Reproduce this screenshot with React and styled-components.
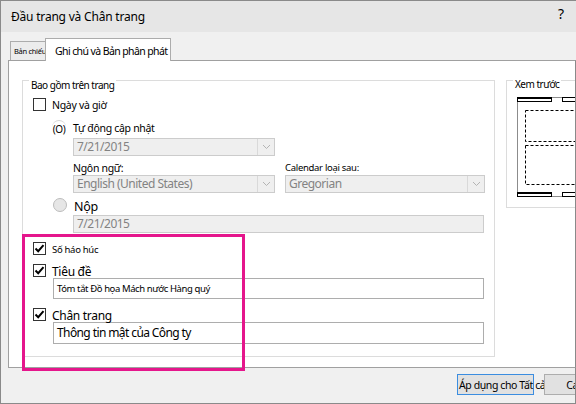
import React from 'react';
import styled, { createGlobalStyle } from 'styled-components';

const GlobalStyle = createGlobalStyle`
html, body {
    margin: 0;
    padding: 0;
    background: #fff;
}
body {
    font-family: "Noto Sans", "Liberation Sans", sans-serif;
    color: #000;
}
* {
    box-sizing: border-box;
}
`;

const Check = () => (
    <svg width="11" height="11" viewBox="0 0 11 11">
        <path d="M1.5 5.5 L4.2 8.2 L9.5 2.2" fill="none" stroke="#000" strokeWidth="2" />
    </svg>
);

const Chevron = () => (
    <svg width="9" height="6" viewBox="0 0 9 6">
        <path d="M1 1 L4.5 4.5 L8 1" fill="none" stroke="#b4b4b4" strokeWidth="1" />
    </svg>
);

// header / body / footer placeholders on a page thumbnail
const PagePreview = () => (
    <svg width="70" height="101" viewBox="0 0 70 101">
        <rect x="0.5" y="0.5" width="90" height="99" fill="#fff" stroke="#8c8c8c" />
        <rect x="0" y="0" width="35" height="5" fill="#000" />
        <rect x="1" y="2" width="33" height="2" fill="#fff" />
        <rect x="45.5" y="0.5" width="40" height="4" fill="#fff" stroke="#000" />
        <rect x="8.5" y="13.5" width="80" height="31" fill="none" stroke="#000" strokeDasharray="3 2" />
        <rect x="8.5" y="48.5" width="80" height="39" fill="none" stroke="#000" strokeDasharray="3 2" />
        <rect x="0" y="95" width="35" height="5" fill="#000" />
        <rect x="1" y="97" width="33" height="2" fill="#fff" />
        <rect x="45.5" y="95.5" width="40" height="4" fill="#fff" stroke="#000" />
    </svg>
);

const CheckRow = ({ checked, size, top, children }) => (
    <Row $top={top} $height={13}>
        <Box>{checked && <Check />}</Box>
        <Label $size={size}>{children}</Label>
    </Row>
);

const App = () => {
    return (
        <>
            <GlobalStyle />
            <Window>
                <TitleBar>
                    <Title>Đầu trang và Chân trang</Title>
                    <Help>?</Help>
                </TitleBar>

                <Body>
                    <Tabs>
                        <Tab>Bản chiếu</Tab>
                        <Tab $active>Ghi chú và Bản phân phát</Tab>
                    </Tabs>

                    <Panel>
                        <Group $width={473} $height={277}>
                            <GroupLabel>Bao gồm trên trang</GroupLabel>

                            <CheckRow top={17}>Ngày và giờ</CheckRow>

                            <Row $top={9} $height={14} $indent={20}>
                                <RadioText>(O)</RadioText>
                                <Label>Tự động cập nhật</Label>
                            </Row>
                            <Select $top={4} $indent={40} $width={202}>
                                <span>7/21/2015</span>
                                <Arrow><Chevron /></Arrow>
                            </Select>

                            <Split>
                                <Column $width={202}>
                                    <SmallLabel>Ngôn ngữ:</SmallLabel>
                                    <Select $width={202}>
                                        <span>English (United States)</span>
                                        <Arrow><Chevron /></Arrow>
                                    </Select>
                                </Column>
                                <Column $width={200}>
                                    <SmallLabel $narrow>Calendar loại sau:</SmallLabel>
                                    <Select $width={200}>
                                        <span>Gregorian</span>
                                        <Arrow><Chevron /></Arrow>
                                    </Select>
                                </Column>
                            </Split>

                            <Row $top={5} $height={14} $indent={20}>
                                <Radio />
                                <Label $size={12.5}>Nộp</Label>
                            </Row>
                            <Field $top={3} $indent={40} $width={411} $height={18} $disabled>
                                7/21/2015
                            </Field>

                            <CheckRow top={9} checked size={9.5}>Số háo húc</CheckRow>
                            <CheckRow top={9} checked size={12}>Tiêu đề</CheckRow>
                            <Field $top={1} $indent={20} $width={431} $height={21} $size={9.5} $spacing={-0.4}>
                                Tóm tắt Đồ họa Mách nước Hàng quý
                            </Field>
                            <CheckRow top={9} checked size={12}>Chân trang</CheckRow>
                            <Field $top={1} $indent={20} $width={431} $height={22} $spacing={-0.6}>
                                Thông tin mật của Công ty
                            </Field>
                        </Group>

                        <Group $width={90} $height={128}>
                            <GroupLabel $top={-3}>Xem trước</GroupLabel>
                            <PreviewArea>
                                <PagePreview />
                            </PreviewArea>
                        </Group>
                    </Panel>

                    <Footer>
                        <Button $primary>Áp dụng cho Tất cả</Button>
                        <Button>Cancel</Button>
                    </Footer>
                </Body>

                <Highlight />
            </Window>
        </>
    );
};

export default App;



const Window = styled.div`
position: relative;
width: 576px;
height: 404px;
display: flex;
flex-direction: column;
background: #f0f0f0;
border: 1px solid #8a8a8a;
border-right: none;
overflow: hidden;
`;

const TitleBar = styled.div`
display: flex;
align-items: center;
justify-content: space-between;
height: 31px;
flex-shrink: 0;
padding: 0 12px 0 10px;
background: #e6e6e6;
`;

const Title = styled.div`
font-size: 12px;
letter-spacing: -0.2px;
`;

const Help = styled.div`
font-size: 14px;
margin-top: -6px;
`;

const Body = styled.div`
display: flex;
flex-direction: column;
flex: 1;
padding: 6px 0 0 7px;
`;

const Tabs = styled.div`
position: relative;
z-index: 1;
display: flex;
align-items: flex-end;
height: 23px;
margin: 0 0 -1px 2px;
`;

const Tab = styled.div`
height: ${p => p.$active ? '23px' : '19px'};
width: ${p => p.$active ? '126px' : '37px'};
margin-left: ${p => p.$active ? '-2px' : '0'};
margin-bottom: ${p => p.$active ? '0' : '1px'};
padding-left: ${p => p.$active ? '9px' : '3px'};
border: 1px solid #acacac;
border-bottom: none;
background: ${p => p.$active ? '#fff' : '#ececec'};
font-size: ${p => p.$active ? '10.5px' : '7.5px'};
letter-spacing: ${p => p.$active ? '-0.6px' : '-0.3px'};
line-height: ${p => p.$active ? '24px' : '18px'};
white-space: nowrap;
overflow: hidden;
`;

const Panel = styled.div`
display: flex;
align-items: flex-start;
gap: 11px;
height: 308px;
padding: 19px 0 0 13px;
background: #fff;
border: 1px solid #a0a0a0;
border-right-color: #8a8a8a;
overflow: hidden;
`;

const Group = styled.div`
position: relative;
flex-shrink: 0;
width: ${p => p.$width}px;
height: ${p => p.$height}px;
padding: 0 0 0 10px;
border: 1px solid #dcdcdc;
`;

const GroupLabel = styled.div`
position: absolute;
top: ${p => p.$top ?? -2}px;
left: 6px;
padding: 0 2px;
background: #fff;
font-size: 10px;
letter-spacing: -0.5px;
line-height: 13px;
`;

const Row = styled.div`
display: flex;
align-items: center;
gap: 6px;
height: ${p => p.$height}px;
margin-top: ${p => p.$top}px;
margin-left: ${p => p.$indent || 0}px;
`;

const Box = styled.span`
display: inline-flex;
align-items: center;
justify-content: center;
width: 13px;
height: 13px;
flex-shrink: 0;
border: 1px solid #333;
background: #fff;
`;

const Label = styled.span`
font-size: ${p => p.$size || 10.5}px;
letter-spacing: -0.3px;
line-height: 15px;
padding-top: 2px;
white-space: nowrap;
`;

const RadioText = styled.span`
width: 14px;
height: 14px;
flex-shrink: 0;
border-radius: 50%;
border-top: 1px solid #d6d6d6;
font-size: 10px;
line-height: 16px;
text-align: center;
letter-spacing: -0.5px;
margin: 0 1px 0 -1px;
`;

const Radio = styled.span`
width: 14px;
height: 14px;
flex-shrink: 0;
margin-right: 1px;
border-radius: 50%;
border: 1px solid #bcbcbc;
background: #e6e6e6;
`;

const Select = styled.div`
display: flex;
align-items: center;
justify-content: space-between;
width: ${p => p.$width}px;
height: 18px;
margin-top: ${p => p.$top || 0}px;
margin-left: ${p => p.$indent || 0}px;
padding-left: 3px;
border: 1px solid #cccccc;
background: #efefef;
color: #838383;
font-size: 12px;
letter-spacing: -0.5px;
line-height: 16px;
`;

const Arrow = styled.span`
display: flex;
align-items: center;
justify-content: center;
width: 17px;
height: 100%;
border-left: 1px solid #d9d9d9;
`;

const Split = styled.div`
display: flex;
gap: 10px;
margin: 5px 0 0 40px;
`;

const Column = styled.div`
display: flex;
flex-direction: column;
width: ${p => p.$width}px;
`;

const SmallLabel = styled.div`
height: 14px;
font-size: ${p => p.$narrow ? '9.5px' : '10.5px'};
letter-spacing: -0.3px;
line-height: 14px;
`;

const Field = styled.div`
width: ${p => p.$width}px;
height: ${p => p.$height}px;
margin-top: ${p => p.$top}px;
margin-left: ${p => p.$indent}px;
padding-left: 3px;
border: 1px solid ${p => p.$disabled ? '#cccccc' : '#adadad'};
background: ${p => p.$disabled ? '#efefef' : '#fff'};
color: ${p => p.$disabled ? '#838383' : '#000'};
font-size: ${p => p.$size || 12}px;
letter-spacing: ${p => p.$spacing ?? -0.5}px;
line-height: ${p => p.$height - 2}px;
white-space: nowrap;
`;

const PreviewArea = styled.div`
padding-top: 16px;
line-height: 0;
`;

const Footer = styled.div`
display: flex;
gap: 10px;
height: 35px;
padding: 6px 0 0 449px;
border-right: 1px solid #8a8a8a;
overflow: hidden;
`;

const Button = styled.button`
flex-shrink: 0;
width: ${p => p.$primary ? '77px' : '75px'};
height: 21px;
padding: 0 0 0 ${p => p.$primary ? '1px' : '0'};
border: 1px solid ${p => p.$primary ? '#3b8de0' : '#adadad'};
background: #e1e1e1;
font-family: inherit;
font-size: 10.5px;
letter-spacing: -0.4px;
color: #000;
text-align: ${p => p.$primary ? 'left' : 'center'};
white-space: nowrap;
overflow: visible;
`;

const Highlight = styled.div`
position: absolute;
left: 21px;
top: 233px;
width: 223px;
height: 137px;
border: 3px solid #e5168c;
pointer-events: none;
`;
